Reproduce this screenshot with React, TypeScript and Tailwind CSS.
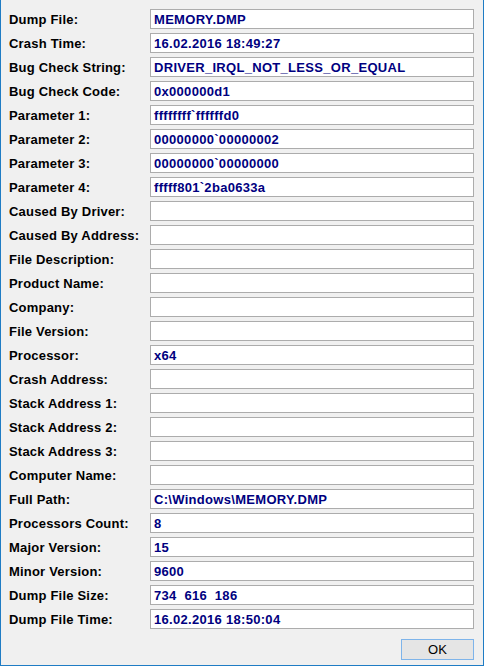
const rows: [string, string][] = [
  ['Dump File:', 'MEMORY.DMP'],
  ['Crash Time:', '16.02.2016 18:49:27'],
  ['Bug Check String:', 'DRIVER_IRQL_NOT_LESS_OR_EQUAL'],
  ['Bug Check Code:', '0x000000d1'],
  ['Parameter 1:', 'ffffffff`ffffffd0'],
  ['Parameter 2:', '00000000`00000002'],
  ['Parameter 3:', '00000000`00000000'],
  ['Parameter 4:', 'fffff801`2ba0633a'],
  ['Caused By Driver:', ''],
  ['Caused By Address:', ''],
  ['File Description:', ''],
  ['Product Name:', ''],
  ['Company:', ''],
  ['File Version:', ''],
  ['Processor:', 'x64'],
  ['Crash Address:', ''],
  ['Stack Address 1:', ''],
  ['Stack Address 2:', ''],
  ['Stack Address 3:', ''],
  ['Computer Name:', ''],
  ['Full Path:', 'C:\\Windows\\MEMORY.DMP'],
  ['Processors Count:', '8'],
  ['Major Version:', '15'],
  ['Minor Version:', '9600'],
  ['Dump File Size:', '734  616  186'],
  ['Dump File Time:', '16.02.2016 18:50:04'],
];

export default function App() {
  return (
    <div
      className="w-[484px] h-[666px] bg-[#f0f0f0] border-x border-b border-[#1f7cc4] flex flex-col pt-[9px] pl-[8px] pr-[9px]"
      style={{ fontFamily: '"Liberation Sans", Arial, sans-serif' }}
    >
      <div className="flex flex-col gap-[4px]">
        {rows.map(([label, value]) => (
          <div key={label} className="flex items-center h-[20px]">
            <div className="w-[141px] text-[13px] font-bold text-black leading-none tracking-[0.2px] whitespace-nowrap">
              {label}
            </div>
            <div className="flex-1 h-[20px] bg-white border border-[#acacac] flex items-center pl-[3px] text-[13px] font-bold text-[#000080] leading-none tracking-[0.3px] whitespace-pre">
              {value}
            </div>
          </div>
        ))}
      </div>
      <div className="flex justify-end mt-[10px]">
        <button className="w-[73px] h-[21px] bg-[#e5e5e5] border border-[#7eb4ea] text-[13px] text-black leading-none">
          OK
        </button>
      </div>
    </div>
  );
}
